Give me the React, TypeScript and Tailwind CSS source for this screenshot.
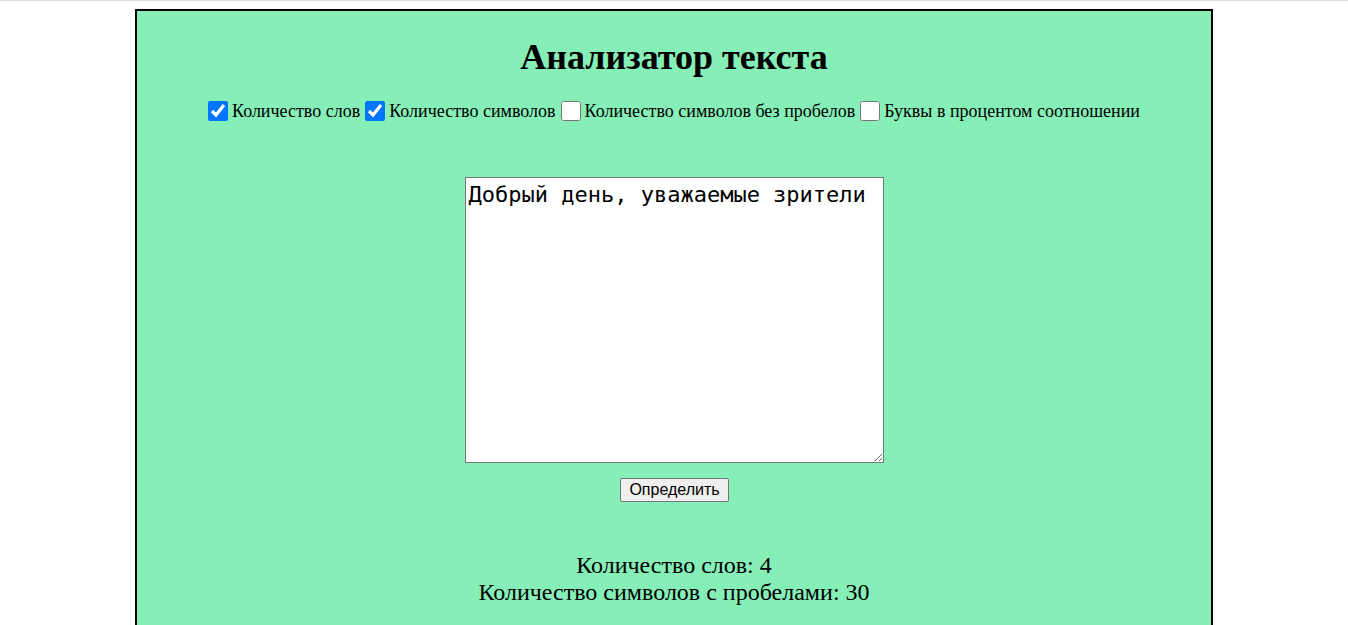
import React, { useState } from "react";

const options = [
  { label: "Количество слов", checked: true },
  { label: "Количество символов", checked: true },
  { label: "Количество символов без пробелов", checked: false },
  { label: "Буквы в процентом соотношении", checked: false },
];

export default function App() {
  const [text, setText] = useState("Добрый день, уважаемые зрители ");
  const [checks, setChecks] = useState(options.map((o) => o.checked));

  return (
    <div className="min-h-[625px] bg-white border-t border-[#dcdcdc] pt-2 font-['Liberation_Serif',serif] text-black">
      <div className="w-[80%] mx-auto bg-[#86efb7] border-2 border-black flex flex-col items-center pt-[26px] pb-[40px]">
        <h1 className="text-[36px] font-bold leading-[41px]">Анализатор текста</h1>

        {/* Options */}
        <div className="mt-[22px] ml-[3px] text-[18px] leading-[22px] flex items-center">
          {options.map((o, i) => (
            <label key={o.label} className="inline-flex items-center mr-[4px]">
              <input
                type="checkbox"
                checked={checks[i]}
                onChange={() => setChecks(checks.map((c, j) => (j === i ? !c : c)))}
                className="w-5 h-5 ml-[1px] mr-[4px] accent-[#0075ff]"
              />
              {o.label}
            </label>
          ))}
        </div>

        <textarea
          value={text}
          onChange={(e) => setText(e.target.value)}
          className="mt-[55px] ml-[2px] w-[419px] h-[286px] bg-white border border-[#767676] px-[2px] pt-[4px] font-['DejaVu_Sans_Mono',monospace] text-[22px] leading-[26px] resize"
        />

        <button className="mt-[15px] ml-[1px] h-[24px] px-[8px] bg-[#efefef] border border-[#767676] rounded-[2px] font-['Liberation_Sans',sans-serif] text-[16px] leading-[20px]">
          Определить
        </button>

        {/* Results */}
        <div className="mt-[50px] text-[24px] leading-[27px] text-center">
          <div>Количество слов: 4</div>
          <div>Количество символов с пробелами: 30</div>
        </div>
      </div>
    </div>
  );
}
